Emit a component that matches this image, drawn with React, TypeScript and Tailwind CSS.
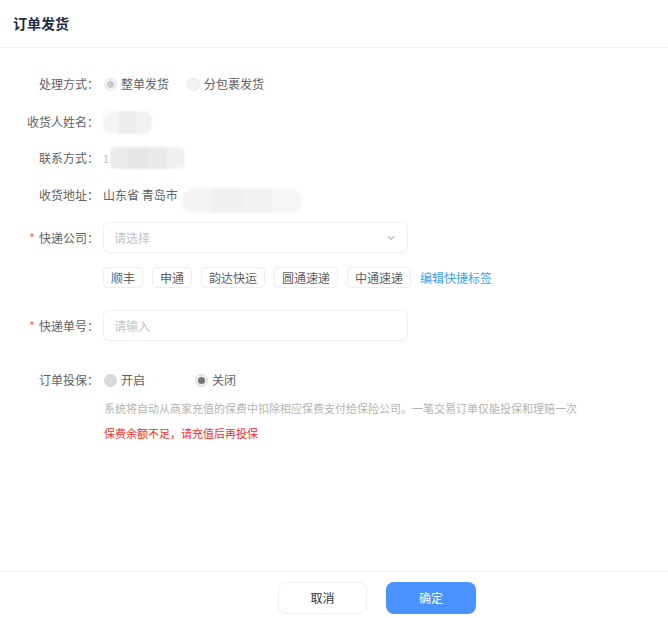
import { ChevronDown } from "lucide-react";

const font = {
  fontFamily: '"Noto Sans CJK SC", "Noto Sans", "Liberation Sans", sans-serif',
};

const quickTags = ["顺丰", "申通", "韵达快运", "圆通速递", "中通速递"];

function Label({ text, required }: { text: string; required?: boolean }) {
  return (
    <div className="w-[99px] shrink-0 text-right text-[12px] text-[#5e6166]">
      {required && <span className="mr-[4px] text-[#f56c6c]">*</span>}
      {text}：
    </div>
  );
}

function Radio({
  checked,
  tone,
  label,
}: {
  checked?: boolean;
  tone: "light" | "dark";
  label: string;
}) {
  let circle = "border-[#e4e7ed] bg-[#f2f3f5]";
  if (tone === "dark") {
    circle = checked
      ? "border-[#dcdcdc] bg-[#ececec]"
      : "border-[#d6d6d6] bg-[#d9d9d9]";
  }
  return (
    <label className="flex items-center gap-[4px]">
      <span
        className={`flex h-[13px] w-[13px] items-center justify-center rounded-full border ${circle}`}
      >
        {checked && (
          <span
            className={`h-[7px] w-[7px] rounded-full ${
              tone === "light" ? "bg-[#c8cacf]" : "bg-[#787878]"
            }`}
          />
        )}
      </span>
      <span className="text-[12px] text-[#5e6166]">{label}</span>
    </label>
  );
}

export default function App() {
  return (
    <div style={font} className="flex h-[618px] w-full flex-col bg-white">
      {/* Header */}
      <div className="flex h-[48px] shrink-0 items-center border-b border-[#f0f2f5] px-[13px]">
        <h1 className="text-[14px] font-bold text-[#1f2b45]">订单发货</h1>
      </div>

      {/* Body */}
      <div className="flex flex-1 flex-col pt-[18px]">
        <div className="flex h-[36px] items-center">
          <Label text="处理方式" />
          <div className="ml-[5px] flex items-center gap-[18px]">
            <Radio checked tone="light" label="整单发货" />
            <Radio tone="light" label="分包裹发货" />
          </div>
        </div>

        <div className="flex h-[40px] items-center">
          <Label text="收货人姓名" />
          <div className="ml-[4px] flex h-[23px] w-[49px] overflow-hidden rounded-[8px] blur-[1px]">
            <div className="flex-1 bg-[#f5f5f5]" />
            <div className="flex-1 bg-[#ececec]" />
            <div className="flex-1 bg-[#f2f2f2]" />
          </div>
        </div>

        <div className="flex h-[32px] items-center">
          <Label text="联系方式" />
          <div className="ml-[4px] flex items-center">
            <span className="text-[11px] text-[#c0c0c0]">1</span>
            <div className="ml-[1px] flex h-[22px] w-[75px] overflow-hidden rounded-[6px] blur-[1px]">
              <div className="flex-1 bg-[#ebebeb]" />
              <div className="flex-1 bg-[#e6e6e6]" />
              <div className="flex-1 bg-[#e9e9e9]" />
              <div className="flex-1 bg-[#f0f0f0]" />
            </div>
          </div>
        </div>

        <div className="flex h-[42px] items-center">
          <Label text="收货地址" />
          <div className="ml-[4px] flex items-center">
            <span className="text-[12px] text-[#5e6166]">山东省 青岛市</span>
            <div className="ml-[4px] mt-[10px] flex h-[25px] w-[120px] overflow-hidden rounded-[12px] blur-[1.5px]">
              <div className="flex-1 bg-[#f4f4f4]" />
              <div className="flex-1 bg-[#efefef]" />
              <div className="flex-1 bg-[#f2f2f2]" />
              <div className="flex-1 bg-[#f6f6f6]" />
            </div>
          </div>
        </div>

        <div className="mt-[6px] flex h-[31px] items-center">
          <Label text="快递公司" required />
          <div className="ml-[4px] flex h-[31px] w-[305px] items-center justify-between rounded-[6px] border border-[#ebeef5] pl-[10px] pr-[10px]">
            <span className="text-[12px] text-[#c0c4cc]">请选择</span>
            <ChevronDown className="h-[12px] w-[12px] text-[#909399]" strokeWidth={2} />
          </div>
        </div>

        <div className="mt-[14px] flex h-[21px] items-center">
          <div className="w-[99px] shrink-0" />
          <div className="ml-[4px] flex items-center gap-[9px]">
            {quickTags.map((tag) => (
              <span
                key={tag}
                className="flex h-[21px] items-center rounded-[4px] border border-[#ebeef5] px-[7px] text-[12px] text-[#5e6166]"
              >
                {tag}
              </span>
            ))}
            <span className="text-[12px] text-[#409eff]">编辑快捷标签</span>
          </div>
        </div>

        <div className="mt-[22px] flex h-[31px] items-center">
          <Label text="快递单号" required />
          <div className="ml-[4px] flex h-[31px] w-[305px] items-center rounded-[6px] border border-[#ebeef5] pl-[10px]">
            <span className="text-[12px] text-[#c0c4cc]">请输入</span>
          </div>
        </div>

        <div className="mt-[29px] flex h-[20px] items-center">
          <Label text="订单投保" />
          <div className="ml-[5px] flex items-center gap-[50px]">
            <Radio tone="dark" label="开启" />
            <Radio checked tone="dark" label="关闭" />
          </div>
        </div>

        <div className="mt-[11px] pl-[104px] text-[11px] leading-[14px] text-[#b4b4b4]">
          系统将自动从商家充值的保费中扣除相应保费支付给保险公司。一笔交易订单仅能投保和理赔一次
        </div>
        <div className="mt-[11px] pl-[104px] text-[11px] leading-[14px] text-[#ff2b2b]">
          保费余额不足，请充值后再投保
        </div>
      </div>

      {/* Footer */}
      <div className="flex h-[47px] shrink-0 items-start gap-[19px] border-t border-[#f0f2f5] pl-[278px] pt-[10px]">
        <button className="h-[32px] w-[89px] rounded-[8px] border border-[#ebeef5] bg-white text-[12px] text-[#303133]">
          取消
        </button>
        <button className="h-[32px] w-[90px] rounded-[8px] bg-[#4a93ff] text-[12px] text-white">
          确定
        </button>
      </div>
    </div>
  );
}
